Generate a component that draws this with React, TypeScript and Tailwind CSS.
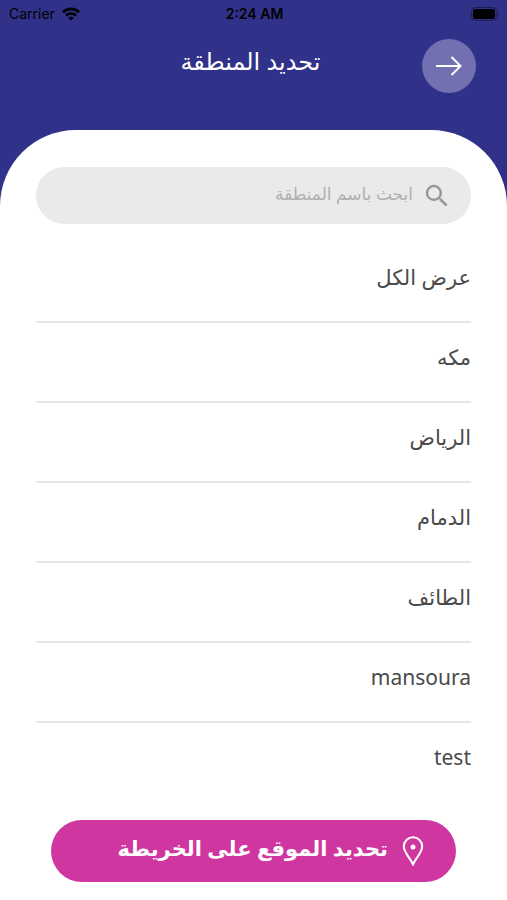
import { useState } from "react";
import { MdSearch } from "react-icons/md";

const regions = ["عرض الكل", "مكه", "الرياض", "الدمام", "الطائف", "mansoura", "test"];

function StatusBar() {
  return (
    <div
      dir="ltr"
      className="grid h-7 grid-cols-3 items-center pl-[9px] pr-[7px] font-['Inter','Liberation_Sans',sans-serif] text-sm text-black"
    >
      <div className="flex items-center gap-[7px]">
        <span>Carrier</span>
        <svg viewBox="0 0 18 14" className="h-[14px] w-[18px]" fill="none" stroke="currentColor" strokeWidth="2.8">
          <path d="M1 5.2C5.6 .8 12.4 .8 17 5.2" />
          <path d="M4 8.6C6.9 5.9 11.1 5.9 14 8.6" />
          <path d="M9 13.6 6.2 10.8C7.8 9.4 10.2 9.4 11.8 10.8Z" fill="currentColor" stroke="none" />
        </svg>
      </div>
      <span className="text-center font-semibold">2:24 AM</span>
      <svg viewBox="0 0 29 14" className="h-[14px] w-[29px] justify-self-end">
        <rect x=".5" y=".5" width="25" height="13" rx="4" fill="none" stroke="#000" strokeOpacity=".4" />
        <rect x="2" y="2" width="22" height="10" rx="2.5" fill="#000" />
        <path d="M27 5c1.6.6 1.6 3.4 0 4Z" fill="#000" fillOpacity=".4" />
      </svg>
    </div>
  );
}

function Header() {
  return (
    <header className="grid grid-cols-[54px_1fr_54px] items-start ps-[31px] pe-[25px] pt-[11px] pb-[37px]">
      <button
        type="button"
        aria-label="رجوع"
        className="flex size-[54px] items-center justify-center rounded-full bg-[#7270b0] text-white"
      >
        <svg viewBox="0 0 26 20" className="h-5 w-[26px]" fill="none" stroke="currentColor" strokeWidth="2">
          <path d="M0 10H24.5M15.5 1L24.5 10L15.5 19" />
        </svg>
      </button>
      <h1 className="pt-1 text-center text-2xl leading-9 text-white">تحديد المنطقة</h1>
    </header>
  );
}

export default function App() {
  const [query, setQuery] = useState("");
  const visible = regions.filter((region) => region.includes(query.trim()));

  return (
    <div
      dir="rtl"
      className="flex min-h-screen flex-col bg-[#303188] font-['Noto_Sans','DejaVu_Sans',sans-serif]"
    >
      <StatusBar />
      <Header />
      <main className="flex flex-1 flex-col rounded-t-[76px] bg-white px-9 pt-[37px] pb-[18px]">
        <label className="flex h-[57px] items-center gap-[9px] rounded-full bg-[#eaeaea] px-[19px]">
          <MdSearch className="size-[30px] shrink-0 text-[#979797]" />
          <input
            type="text"
            aria-label="ابحث باسم المنطقة"
            placeholder="ابحث باسم المنطقة"
            value={query}
            onChange={(e) => setQuery(e.target.value)}
            className="min-w-0 flex-1 bg-transparent pb-1 text-[17px] text-[#4a4a4a] outline-none placeholder:text-[#b0b0b0]"
          />
        </label>

        <ul className="mt-[19px] divide-y-2 divide-[#e6e6e6]">
          {visible.map((region) => (
            <li key={region}>
              <button type="button" className="flex h-[78px] w-full items-center pb-2 text-start text-[21px] text-[#4a4a4a]">
                {region}
              </button>
            </li>
          ))}
        </ul>

        <button
          type="button"
          className="mx-[15px] mt-auto flex h-[62px] items-center gap-[14px] rounded-full bg-[#d0369f] px-8 text-[21px] font-bold text-white"
        >
          <svg viewBox="0 0 22 30" className="h-[30px] w-[22px] shrink-0" fill="none" stroke="currentColor" strokeWidth="2">
            <path d="M11 28.500C9 23 1.800 16.500 1.800 10.500A9.200 9.200 0 0 1 20.200 10.500C20.200 16.500 13 23 11 28.500Z" />
            <circle cx="11" cy="11" r="2.500" fill="currentColor" stroke="none" />
          </svg>
          <span className="pb-1">تحديد الموقع على الخريطة</span>
        </button>
      </main>
    </div>
  );
}
